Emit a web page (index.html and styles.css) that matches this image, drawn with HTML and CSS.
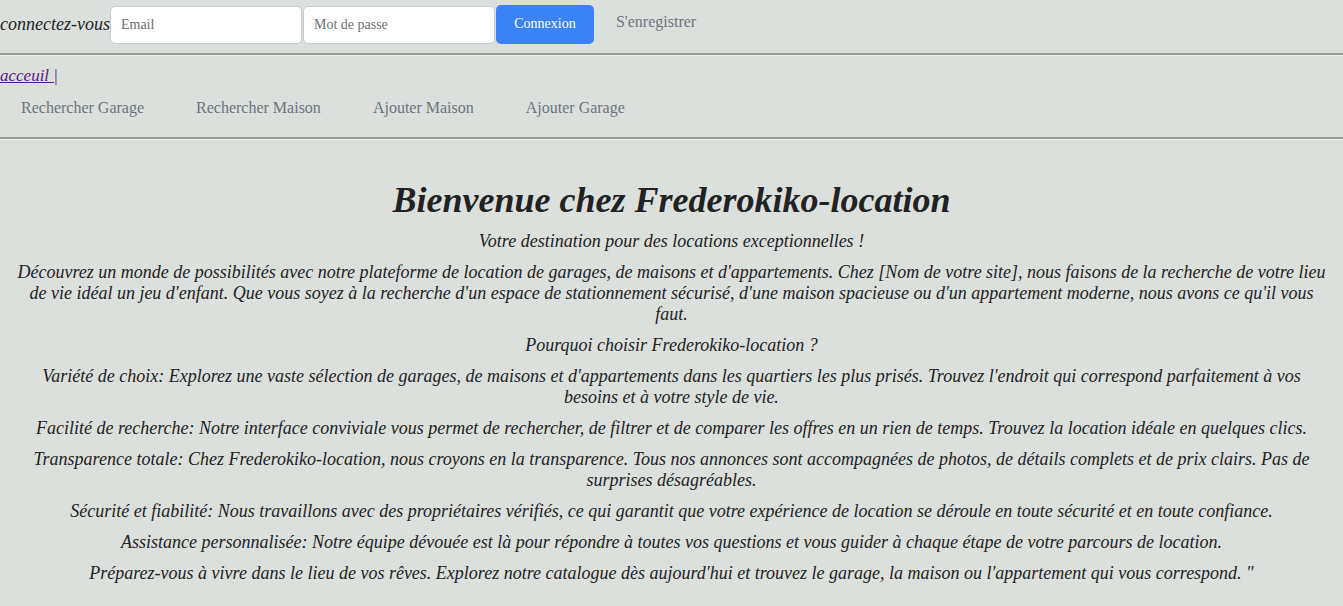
FILE: index.html
```html
<!DOCTYPE html>
<html lang="fr">
<head>
<meta charset="utf-8">
<title>Frederokiko-location</title>
<link rel="stylesheet" href="styles.css">
</head>
<body>
<header class="topbar">
  <span class="login-label">connectez-vous</span>
  <form class="login-form">
    <input class="field" type="email" placeholder="Email">
    <input class="field" type="password" placeholder="Mot de passe">
    <button class="btn-login" type="button">Connexion</button>
  </form>
  <a class="register" href="#">S'enregistrer</a>
</header>
<hr class="sep">
<div class="home-row"><a class="home-link" href="#">acceuil |</a></div>
<nav class="menu">
  <a href="#">Rechercher Garage</a>
  <a href="#">Rechercher Maison</a>
  <a href="#">Ajouter Maison</a>
  <a href="#">Ajouter Garage</a>
</nav>
<hr class="sep">
<main class="content">
  <h1 class="title">Bienvenue chez Frederokiko-location</h1>
  <p>Votre destination pour des locations exceptionnelles !</p>
  <p>Découvrez un monde de possibilités avec notre plateforme de location de garages, de maisons et d'appartements. Chez [Nom de votre site], nous faisons de la recherche de votre lieu de vie idéal un jeu d'enfant. Que vous soyez à la recherche d'un espace de stationnement sécurisé, d'une maison spacieuse ou d'un appartement moderne, nous avons ce qu'il vous faut.</p>
  <p>Pourquoi choisir Frederokiko-location ?</p>
  <p>Variété de choix: Explorez une vaste sélection de garages, de maisons et d'appartements dans les quartiers les plus prisés. Trouvez l'endroit qui correspond parfaitement à vos besoins et à votre style de vie.</p>
  <p>Facilité de recherche: Notre interface conviviale vous permet de rechercher, de filtrer et de comparer les offres en un rien de temps. Trouvez la location idéale en quelques clics.</p>
  <p>Transparence totale: Chez Frederokiko-location, nous croyons en la transparence. Tous nos annonces sont accompagnées de photos, de détails complets et de prix clairs. Pas de surprises désagréables.</p>
  <p>Sécurité et fiabilité: Nous travaillons avec des propriétaires vérifiés, ce qui garantit que votre expérience de location se déroule en toute sécurité et en toute confiance.</p>
  <p>Assistance personnalisée: Notre équipe dévouée est là pour répondre à toutes vos questions et vous guider à chaque étape de votre parcours de location.</p>
  <p>Préparez-vous à vivre dans le lieu de vos rêves. Explorez notre catalogue dès aujourd'hui et trouvez le garage, la maison ou l'appartement qui vous correspond. "</p>
  <h3 class="subtitle">Les dernières locations disponibles</h3>
</main>
</body>
</html>
```
FILE: styles.css
```css
html, body {
  margin: 0;
  padding: 0;
}
body {
  background: #dce0dd;
  font-family: "Liberation Serif", "Times New Roman", serif;
  font-style: italic;
  font-size: 18px;
  color: #222;
}
.topbar {
  display: flex;
  align-items: center;
  height: 49px;
}
.login-label {
  font-size: 18px;
}
.login-form {
  display: flex;
  align-items: center;
  gap: 1px;
  margin: 0;
}
.field {
  box-sizing: border-box;
  width: 192px;
  height: 38px;
  border: 1px solid #c5cbd1;
  border-radius: 5px;
  background: #fff;
  padding: 0 10px;
  font-family: "Liberation Serif", serif;
  font-style: normal;
  font-size: 14px;
  color: #333;
}
.field::placeholder {
  color: #6b6f73;
}
.btn-login {
  box-sizing: border-box;
  width: 98px;
  height: 39px;
  border: none;
  border-radius: 5px;
  background: #3b82f6;
  color: #fff;
  font-family: "Liberation Serif", serif;
  font-size: 14px;
  margin-top: -1px;
}
.register {
  margin-left: 22px;
  margin-top: -5px;
  font-style: normal;
  font-size: 16px;
  color: #6c757d;
  text-decoration: none;
}
.sep {
  margin: 4px 0 0;
  border: none;
  border-top: 2px solid #9a9e9b;
  border-bottom: 1px solid #eef0ee;
  height: 0;
}
.home-row {
  padding-top: 9px;
  line-height: 20px;
}
.home-link {
  color: #551a8b;
  font-size: 17px;
}
.menu {
  display: flex;
  gap: 52px;
  padding: 13px 21px 0;
  height: 34px;
  align-items: flex-start;
}
.menu a {
  font-style: normal;
  font-size: 16px;
  color: #6c757d;
  text-decoration: none;
}
.content {
  text-align: center;
  padding: 0 15px;
}
.title {
  font-size: 36px;
  font-weight: bold;
  margin: 39px 0 10px;
  line-height: 42px;
}
.content p {
  margin: 0 0 10px;
  line-height: 21px;
}
.subtitle {
  font-style: normal;
  font-size: 18px;
  margin: 30px 0 0;
}
```
